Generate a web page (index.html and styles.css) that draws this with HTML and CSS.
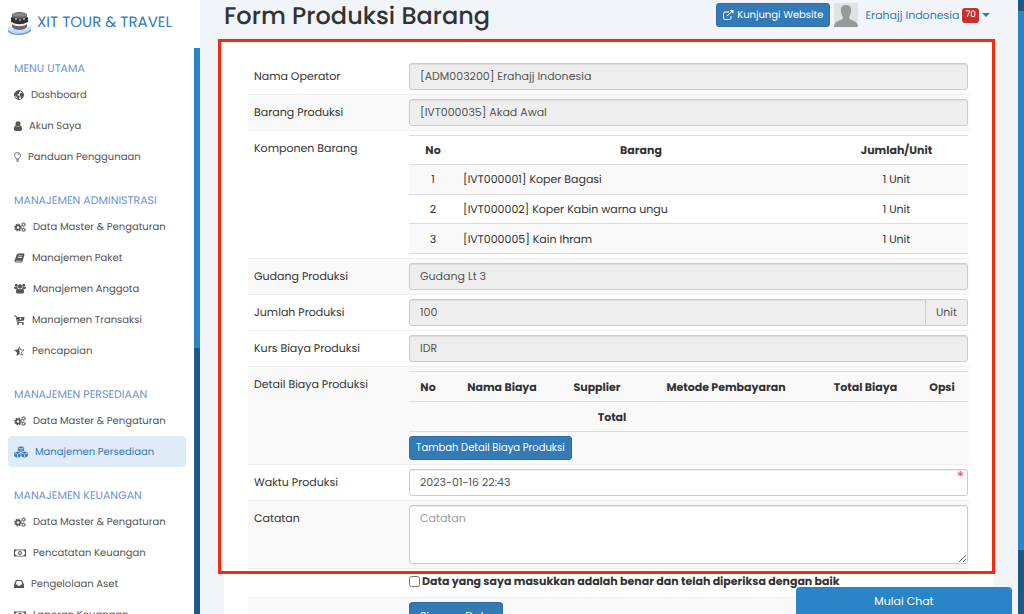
FILE: index.html
```html
<!DOCTYPE html>
<html lang="id">
<head>
<meta charset="utf-8">
<title>Form Produksi Barang</title>
<link rel="stylesheet" href="styles.css">
</head>
<body>
<svg class="defs" aria-hidden="true">
  <symbol id="gears" viewBox="0 0 24 20">
    <circle cx="8" cy="11" r="4.3" fill="none" stroke="currentColor" stroke-width="3.2"/>
    <circle cx="8" cy="11" r="6.6" fill="none" stroke="currentColor" stroke-width="2.4" stroke-dasharray="2.8 2.38"/>
    <circle cx="19" cy="5" r="2.6" fill="none" stroke="currentColor" stroke-width="2"/>
    <circle cx="19" cy="5" r="4" fill="none" stroke="currentColor" stroke-width="1.5" stroke-dasharray="2 2.19"/>
    <circle cx="19" cy="15.5" r="2.6" fill="none" stroke="currentColor" stroke-width="2"/>
    <circle cx="19" cy="15.5" r="4" fill="none" stroke="currentColor" stroke-width="1.5" stroke-dasharray="2 2.19"/>
  </symbol>
  <symbol id="money" viewBox="0 0 24 16">
    <path fill="currentColor" fill-rule="evenodd" d="M0 1h24v14H0zM2 5v6a3 3 0 0 1 3 2.5h14a3 3 0 0 1 3-2.5V5a3 3 0 0 1-3-2.500H5A3 3 0 0 1 2 5z"/>
    <path fill="currentColor" fill-rule="evenodd" d="M12 3.500c5 0 5 9 0 9s-5-9 0-9zM11 5.500l-1.500 1 .5 1h1v2h-1v1h4v-1h-1v-4z"/>
  </symbol>
</svg>
<div class="page">
  <aside class="sidebar">
    <a class="brand" href="#">
      <svg class="brand-logo" viewBox="0 0 24 24" aria-hidden="true">
        <path d="M1 13c0 8 20 9 22-1v7c-4 6-19 6-23 1z" fill="#c3dcf2"/>
        <path d="M0 19c4 5 18 5 23-1v2c-5 5-18 5-23 1z" fill="#5c9cd8"/>
        <path d="M4 4c0-4 15-4 15 0v12c-2 4-13 4-15 0z" fill="#666"/>
        <path d="M4 4c1-3 14-3 15 0-2 2-13 2-15 0z" fill="#888"/>
        <path d="M3 6c3 2 14 2 17 0v5c-3 3-14 3-17 0z" fill="#333"/>
        <path d="M4 11c3 3 12 3 15 0v2c-3 3-12 3-15 0z" fill="#eee"/>
        <path d="M7 8h2M11 9h2M15 8h2" stroke="#bbb" stroke-width="1.5"/>
      </svg>
      <span>XIT TOUR &amp; TRAVEL</span>
    </a>
    <nav class="menu">
      <h2>MENU UTAMA</h2>
      <a href="#"><svg width="10" height="10" viewBox="0 0 20 20"><circle cx="10" cy="10" r="9" fill="none" stroke="currentColor" stroke-width="2"/><path fill="currentColor" d="M1 8l3-5 6-2 3 2-3 2 1 2-3 2-2 1 3 1 3 2-2 3-1 3-3-2-1-4-3-2zM13 6l4-2 2 6-2 5-3 2-1-4-2-3z"/></svg>Dashboard</a>
      <a href="#"><svg width="8" height="10" viewBox="0 0 16 20"><circle cx="8" cy="5.5" r="5" fill="currentColor"/><path fill="currentColor" d="M3 9c3 3 7 3 10 0 3 1 3 5 3 8l-2 3H2l-2-3c0-3 0-7 3-8z"/></svg>Akun Saya</a>
      <a href="#"><svg width="7" height="10" viewBox="0 0 14 20"><path fill="none" stroke="currentColor" stroke-width="1.6" d="M4.500 14c0-3-3.500-4-3.500-7a6 6 0 0 1 12 0c0 3-3.500 4-3.500 7zM7 4c2 0 3 1 3 2.500M4 16h6M5 18.500h4"/></svg>Panduan Penggunaan</a>
      <h2>MANAJEMEN ADMINISTRASI</h2>
      <a href="#"><svg width="12" height="10"><use href="#gears"/></svg>Data Master &amp; Pengaturan</a>
      <a href="#"><svg width="11" height="10" viewBox="0 0 20 20"><path fill="currentColor" fill-rule="evenodd" d="M7 1h12l1 2-4 14-2 2H2l-2-3L4 4zM8 5l-.5 1.500h8L16 5zM7 8.500L6.500 10h8l.5-1.500zM2.500 15.500l.5 1.500h10.500l.5-1.500z"/></svg>Manajemen Paket</a>
      <a href="#"><svg width="12" height="11" viewBox="0 0 24 20"><g fill="currentColor"><circle cx="4.500" cy="3.500" r="3"/><circle cx="19.500" cy="3.500" r="3"/><circle cx="12" cy="6" r="4.300"/><path d="M0 7h7v4H1zM17 7h7l-1 4h-6zM7 10c3 2 7 2 10 0 3 1 3 4 3 8l-2 2H6l-2-2c0-4 0-7 3-8z"/></g></svg>Manajemen Anggota</a>
      <a href="#"><svg width="11" height="10" viewBox="0 0 22 20"><path fill="none" stroke="currentColor" stroke-width="2" d="M0 2h4l3 13h12"/><path fill="currentColor" fill-rule="evenodd" d="M5 4h16l-1 7-12 2zM12 5v2h-2l3 3 3-3h-2V5z"/><circle cx="8" cy="18" r="2" fill="currentColor"/><circle cx="18" cy="18" r="2" fill="currentColor"/></svg>Manajemen Transaksi</a>
      <a href="#"><svg width="11" height="10" viewBox="0 0 22 20"><path fill="none" stroke="currentColor" stroke-width="1.5" d="M11 2l2.500 5.500 6.500.5-5 4 2 6.500-6-3.500"/><path fill="currentColor" d="M11 0v16l-6 4 1-7-6-5 7.500-1z"/></svg>Pencapaian</a>
      <h2>MANAJEMEN PERSEDIAAN</h2>
      <a href="#"><svg width="12" height="10"><use href="#gears"/></svg>Data Master &amp; Pengaturan</a>
      <a class="active" href="#"><svg width="14" height="12" viewBox="0 0 28 24"><g fill="currentColor" stroke="#e0ebf8" stroke-width="1"><path d="M14 0l6.500 2.500v7.500L14 13l-6.500-3V2.500zM7 10.500l7 2.500v8l-7 3-7-3v-8zM21 10.500l7 2.500v8l-7 3-7-3v-8z"/></g><path fill="none" stroke="#e0ebf8" stroke-width="1.5" d="M9 4l5 2 5-2M14 6v5M2 14.500l5 2 5-2M7 17v6M16 14.500l5 2 5-2M21 17v6"/></svg>Manajemen Persediaan</a>
      <h2>MANAJEMEN KEUANGAN</h2>
      <a href="#"><svg width="12" height="10"><use href="#gears"/></svg>Data Master &amp; Pengaturan</a>
      <a href="#"><svg width="12" height="8"><use href="#money"/></svg>Pencatatan Keuangan</a>
      <a href="#"><svg width="10" height="8" viewBox="0 0 20 16"><path fill="currentColor" fill-rule="evenodd" d="M4 0h12l4 9v7H0V9zM5.500 2L3 9h3.500l1 2.500h5l1-2.500H17l-2.500-7z"/></svg>Pengelolaan Aset</a>
      <a href="#"><svg width="12" height="8"><use href="#money"/></svg>Laporan Keuangan</a>
    </nav>
  </aside>
  <main class="main">
    <header class="topbar">
      <h1>Form Produksi Barang</h1>
      <a class="btn visit" href="#"><svg width="11" height="10" viewBox="0 0 22 20"><path fill="none" stroke="currentColor" stroke-width="2" d="M12 4H4a3 3 0 0 0-3 3v9a3 3 0 0 0 3 3h9a3 3 0 0 0 3-3v-4M8 12L18 3"/><path fill="currentColor" d="M13 0h8v8l-3-3-3-2z"/></svg>Kunjungi Website</a>
      <svg class="avatar" viewBox="0 0 24 24" aria-hidden="true"><path fill="#e2e2e2" d="M0 0h24v24H0z"/><path fill="#999" d="M12 2c6 0 6 6 4 10l-1 3c1 3 9 2 9 9H0c0-7 8-6 9-9l-1-3C6 8 6 2 12 2z"/></svg>
      <a class="user" href="#">Erahajj Indonesia <span class="badge">70</span><span class="caret"></span></a>
    </header>
    <form class="card">
      <div class="row"><label for="op">Nama Operator</label><div class="field"><input id="op" value="[ADM003200] Erahajj Indonesia" readonly></div></div>
      <div class="row shaded"><label for="brg">Barang Produksi</label><div class="field"><input id="brg" value="[IVT000035] Akad Awal" readonly></div></div>
      <div class="row"><span class="name">Komponen Barang</span><div class="field">
        <table class="grid parts">
          <thead><tr><th class="c-no">No</th><th>Barang</th><th class="c-qty">Jumlah/Unit</th></tr></thead>
          <tbody>
            <tr><td>1</td><td class="left">[IVT000001] Koper Bagasi</td><td>1 Unit</td></tr>
            <tr><td>2</td><td class="left">[IVT000002] Koper Kabin warna ungu</td><td>1 Unit</td></tr>
            <tr><td>3</td><td class="left">[IVT000005] Kain Ihram</td><td>1 Unit</td></tr>
          </tbody>
        </table></div></div>
      <div class="row shaded"><label for="gd">Gudang Produksi</label><div class="field"><input id="gd" value="Gudang Lt 3" readonly></div></div>
      <div class="row"><label for="jml">Jumlah Produksi</label><div class="field group"><input id="jml" value="100" readonly><span class="addon">Unit</span></div></div>
      <div class="row"><label for="kurs">Kurs Biaya Produksi</label><div class="field"><input id="kurs" value="IDR" readonly></div></div>
      <div class="row shaded"><span class="name">Detail Biaya Produksi</span><div class="field">
        <table class="grid costs">
          <thead><tr><th class="w-no">No</th><th class="w-name">Nama Biaya</th><th class="w-sup">Supplier</th><th class="w-pay">Metode Pembayaran</th><th class="w-tot">Total Biaya</th><th>Opsi</th></tr></thead>
          <tbody><tr><th colspan="4">Total</th><td></td><td></td></tr></tbody>
        </table>
        <button class="btn add" type="button">Tambah Detail Biaya Produksi</button></div></div>
      <div class="row"><label for="wkt">Waktu Produksi</label><div class="field required"><input id="wkt" value="2023-01-16 22:43"></div></div>
      <div class="row shaded"><label for="cat">Catatan</label><div class="field"><textarea id="cat" placeholder="Catatan"></textarea></div></div>
      <div class="row confirm"><span></span><div class="field"><label><input type="checkbox">Data yang saya masukkan adalah benar dan telah diperiksa dengan baik</label></div></div>
      <div class="row shaded"><span></span><div class="field"><button class="btn save" type="button">Simpan Data</button></div></div>
      <div class="highlight"></div>
    </form>
  </main>
  <div class="edge"></div>
</div>
<button class="chat" type="button">Mulai Chat</button>
</body>
</html>
```
FILE: styles.css
```css
* { box-sizing: border-box; }
body {
  margin: 0;
  height: 100vh;
  overflow: hidden;
  font: 11px/18px Poppins, Inter, sans-serif;
  text-rendering: geometricPrecision;
  color: #333;
  background: #f1f5f9;
}
a { color: #337ab7; text-decoration: none; }
.defs { display: none; }
.page { display: flex; height: 100vh; }

.sidebar {
  flex: 0 0 200px;
  min-width: 0;
  background: #fff;
}
.brand {
  display: flex;
  align-items: center;
  gap: 5px;
  height: 48px;
  padding: 0 8px 3px;
  font-size: 15px;
  white-space: nowrap;
}
.brand-logo { width: 24px; height: 24px; }
.menu {
  height: calc(100vh - 48px);
  overflow: hidden;
  padding: 10px 8px 0;
  border-right: 6px solid;
  border-image: linear-gradient(#2b83c8 300px, #1c5a85 300px) 1;
}
.menu h2 {
  margin: 0;
  padding: 0 6px;
  font-size: 11px;
  font-weight: 400;
  line-height: 21px;
  color: #6b93d3;
  white-space: nowrap;
}
.menu a + h2 { margin-top: 18px; }
.menu a {
  display: flex;
  align-items: center;
  gap: 7px;
  height: 31px;
  padding: 0 6px;
  font-size: 10px;
  color: #555;
  white-space: nowrap;
}
.menu a.active { background: #e0ebf8; color: #337ab7; border-radius: 4px; }
.menu svg { flex: none; }

.main { flex: 1; min-width: 0; padding: 0 24px; }
.topbar { display: flex; align-items: center; height: 42px; padding-bottom: 12px; }
h1 { flex: 1; margin: 0; font-size: 24px; line-height: 34px; font-weight: 500; align-self: flex-start; }
.btn {
  display: inline-flex;
  align-items: center;
  gap: 3px;
  height: 24px;
  padding: 0 6px;
  border: 1px solid #2e6da4;
  border-radius: 3px;
  background: #337ab7;
  color: #fff;
  font: 10px/16px Poppins, Inter, sans-serif;
}
.avatar { width: 24px; height: 24px; margin: 0 7px 0 4px; }
.user { display: flex; align-items: center; gap: 3px; margin-right: 4px; }
.badge { padding: 0 3px; border-radius: 3px; background: #c9302c; color: #fff; font-size: 9px; line-height: 15px; }
.caret { border: 4px solid transparent; border-top-color: #337ab7; border-bottom: 0; }

.card { position: relative; padding: 16px 25px 0 24px; background: #fff; height: calc(100vh - 42px); }
.highlight {
  position: absolute;
  top: -3px;
  left: -6px;
  right: -1px;
  height: 535px;
  border: 3px solid #f02d10;
  pointer-events: none;
}
.row {
  display: grid;
  grid-template-columns: 161px 1fr;
  padding: 4px 1px 4px 0;
  border-top: 1px solid #eee;
}
.row:first-child { border-top-color: transparent; }
.row.shaded { background: #f9f9f9; }
.row > label, .name { padding: 4px 6px; }
.field { position: relative; min-width: 0; }
.field > input, textarea {
  display: block;
  width: 100%;
  height: 27px;
  padding: 4px 10px;
  border: 1px solid #ccc;
  border-radius: 3px;
  background: #fff;
  color: #555;
  font: 11px/17px Poppins, Inter, sans-serif;
  box-shadow: inset 0 1px 1px #00000013;
}
.field > input[readonly] { background: #eee; }
textarea { height: 59px; resize: vertical; }
textarea::placeholder { color: #999; }
.group { display: flex; }
.group > input { flex: 1; border-radius: 3px 0 0 3px; }
.addon { width: 42px; border: 1px solid #ccc; border-left: 0; border-radius: 0 3px 3px 0; background: #eee; color: #555; text-align: center; line-height: 25px; }
.required::after { content: "*"; position: absolute; top: 0; right: 4px; color: #d9534f; font-size: 15px; }

.grid { width: 100%; border-collapse: collapse; table-layout: fixed; }
.grid th, .grid td { height: 30px; padding: 0; border-top: 1px solid #ddd; text-align: center; }
.grid tr:last-child > * { border-bottom: 1px solid #ddd; }
.grid thead tr > * { border-bottom: 1px solid #ddd; }
.grid th { font-weight: 700; }
.grid .left { text-align: left; padding-left: 6px; }
.parts { height: 119px; }
.parts th, .parts td { height: 29px; }
.parts tbody tr:nth-child(odd) { background: #f9f9f9; }
.c-no { width: 48px; }
.c-qty { width: 143px; }
.w-no { width: 38px; }
.w-name { width: 110px; }
.w-sup { width: 80px; }
.w-pay { width: 178px; }
.w-tot { width: 101px; }
.add { margin-top: 4px; }
.confirm label { display: flex; align-items: center; gap: 2px; margin-bottom: 4px; font-weight: 700; height: 16px; white-space: nowrap; }
.confirm input { width: 11px; height: 11px; margin: 0; }
.save { height: 27px; padding: 0 10px; font-size: 11px; }

.edge { flex: 0 0 6px; background: linear-gradient(#1c5a85 11px, #2b83c8 11px 550px, #1c5a85 550px); }
.chat {
  position: fixed;
  right: 12px;
  bottom: 0;
  width: 216px;
  height: 27px;
  border: 0;
  border-radius: 4px 4px 0 0;
  background: #2b83c8;
  color: #fff;
  font: 11px/18px Poppins, Inter, sans-serif;
}
```
